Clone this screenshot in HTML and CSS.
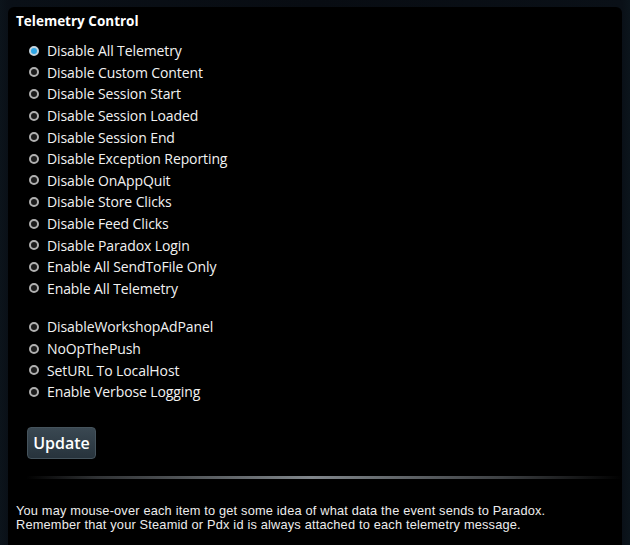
FILE: index.html
```html
<!DOCTYPE html>
<html>
<head>
<meta charset="utf-8">
<link rel="stylesheet" href="styles.css">
</head>
<body>
<div class="frame">
  <div class="panel">
    <div class="title">Telemetry Control</div>
    <ul class="options">
      <li class="opt"><span class="radio checked"></span><span>Disable All Telemetry</span></li>
      <li class="opt"><span class="radio"></span><span>Disable Custom Content</span></li>
      <li class="opt"><span class="radio"></span><span>Disable Session Start</span></li>
      <li class="opt"><span class="radio"></span><span>Disable Session Loaded</span></li>
      <li class="opt"><span class="radio"></span><span>Disable Session End</span></li>
      <li class="opt"><span class="radio"></span><span>Disable Exception Reporting</span></li>
      <li class="opt"><span class="radio"></span><span>Disable OnAppQuit</span></li>
      <li class="opt"><span class="radio"></span><span>Disable Store Clicks</span></li>
      <li class="opt"><span class="radio"></span><span>Disable Feed Clicks</span></li>
      <li class="opt"><span class="radio"></span><span>Disable Paradox Login</span></li>
      <li class="opt"><span class="radio"></span><span>Enable All SendToFile Only</span></li>
      <li class="opt"><span class="radio"></span><span>Enable All Telemetry</span></li>
    </ul>
    <ul class="options second">
      <li class="opt"><span class="radio"></span><span>DisableWorkshopAdPanel</span></li>
      <li class="opt"><span class="radio"></span><span>NoOpThePush</span></li>
      <li class="opt"><span class="radio"></span><span>SetURL To LocalHost</span></li>
      <li class="opt"><span class="radio"></span><span>Enable Verbose Logging</span></li>
    </ul>
    <div class="actions"><button class="btn">Update</button></div>
    <div class="divider"></div>
    <div class="note">
      <div class="note-line">You may mouse-over each item to get some idea of what data the event sends to Paradox.</div>
      <div class="note-line">Remember that your Steamid or Pdx id is always attached to each telemetry message.</div>
    </div>
  </div>
</div>
</body>
</html>
```
FILE: styles.css
```css
html, body {
  margin: 0;
  padding: 0;
  background: #0b1118;
  width: 630px;
  height: 545px;
  overflow: hidden;
}
.frame {
  padding: 7px 8px 0 8px;
  height: 545px;
  box-sizing: border-box;
  background: linear-gradient(to right, #0c141b 0, #0a1017 8px, #080c12 50%, #0a1017 622px, #0c151c 630px);
}
.panel {
  background: #000;
  height: 100%;
  border-radius: 6px 6px 0 0;
  padding: 6px 0 0 8px;
  box-sizing: border-box;
  font-family: "Open Sans", sans-serif;
  color: #fff;
}
.title {
  font-weight: 700;
  font-size: 13.5px;
  line-height: 16px;
  margin-bottom: 11px;
}
.options {
  list-style: none;
  margin: 0;
  padding: 0 0 0 11px;
}
.options.second {
  margin-top: 17px;
}
.opt {
  display: flex;
  align-items: center;
  height: 21.6px;
  font-size: 14px;
  letter-spacing: -0.1px;
  color: #f2f2f2;
}
.radio {
  width: 6px;
  height: 6px;
  border: 2px solid #b0b0b0;
  border-radius: 50%;
  background: #1c1c1c;
  margin: 0 8px 0 2px;
  flex: none;
}
.radio.checked {
  border-color: #c4d3dc;
  background: #2ea6e6;
}
.actions {
  padding: 24px 0 0 11px;
}
.btn {
  display: block;
  font-family: "Open Sans", sans-serif;
  font-size: 16px;
  font-weight: 600;
  color: #fff;
  background: linear-gradient(#3a4852, #27333c);
  border: 1px solid #45535c;
  border-radius: 4px;
  height: 32px;
  width: 69px;
  padding: 0;
}
.divider {
  height: 3px;
  margin: 17px 0 0 10px;
  background: linear-gradient(to right, rgba(120,126,132,0) 0, rgba(120,126,132,0.4) 12%, #80868b 48%, rgba(120,126,132,0.5) 80%, rgba(120,126,132,0) 100%);
}
.note {
  margin-top: 25px;
  font-family: "Liberation Sans", Arial, sans-serif;
  font-size: 12.8px;
  color: #ececec;
  letter-spacing: 0.18px;
}
.note-line {
  line-height: 14.5px;
  white-space: nowrap;
}
```
